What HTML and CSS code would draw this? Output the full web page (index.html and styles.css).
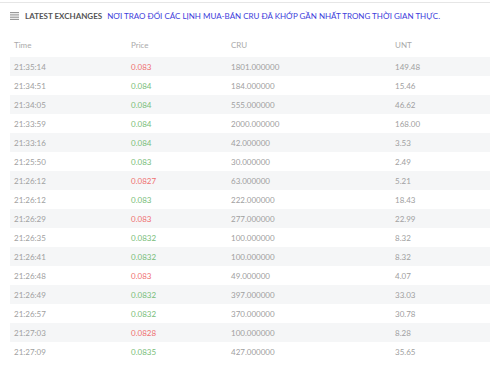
FILE: index.html
```html
<!DOCTYPE html>
<html>
<head>
<meta charset="utf-8">
<link rel="stylesheet" href="styles.css">
</head>
<body>
<div class="panel">
  <div class="title">
    <svg class="icon" width="9" height="8" viewBox="0 0 9 8"><rect x="0" y="0" width="9" height="1.2" fill="#999"/><rect x="0" y="2.3" width="9" height="1.2" fill="#999"/><rect x="0" y="4.6" width="9" height="1.2" fill="#999"/><rect x="0" y="6.8" width="9" height="1.2" fill="#999"/></svg>
    <span class="name">LATEST EXCHANGES</span>
    <span class="desc">NƠI TRAO ĐỔI CÁC LỊNH MUA-BÁN CRU ĐÃ KHỚP GẦN NHẤT TRONG THỜI GIAN THỰC.</span>
  </div>
  <table class="trades">
    <thead>
      <tr><th class="c1">Time</th><th class="c2">Price</th><th class="c3">CRU</th><th class="c4">UNT</th></tr>
    </thead>
    <tbody>
      <tr><td>21:35:14</td><td class="down">0.083</td><td>1801.000000</td><td>149.48</td></tr>
      <tr><td>21:34:51</td><td class="up">0.084</td><td>184.000000</td><td>15.46</td></tr>
      <tr><td>21:34:05</td><td class="up">0.084</td><td>555.000000</td><td>46.62</td></tr>
      <tr><td>21:33:59</td><td class="up">0.084</td><td>2000.000000</td><td>168.00</td></tr>
      <tr><td>21:33:16</td><td class="up">0.084</td><td>42.000000</td><td>3.53</td></tr>
      <tr><td>21:25:50</td><td class="up">0.083</td><td>30.000000</td><td>2.49</td></tr>
      <tr><td>21:26:12</td><td class="down">0.0827</td><td>63.000000</td><td>5.21</td></tr>
      <tr><td>21:26:12</td><td class="up">0.083</td><td>222.000000</td><td>18.43</td></tr>
      <tr><td>21:26:29</td><td class="down">0.083</td><td>277.000000</td><td>22.99</td></tr>
      <tr><td>21:26:35</td><td class="up">0.0832</td><td>100.000000</td><td>8.32</td></tr>
      <tr><td>21:26:41</td><td class="up">0.0832</td><td>100.000000</td><td>8.32</td></tr>
      <tr><td>21:26:48</td><td class="down">0.083</td><td>49.000000</td><td>4.07</td></tr>
      <tr><td>21:26:49</td><td class="up">0.0832</td><td>397.000000</td><td>33.03</td></tr>
      <tr><td>21:26:57</td><td class="up">0.0832</td><td>370.000000</td><td>30.78</td></tr>
      <tr><td>21:27:03</td><td class="down">0.0828</td><td>100.000000</td><td>8.28</td></tr>
      <tr><td>21:27:09</td><td class="up">0.0835</td><td>427.000000</td><td>35.65</td></tr>
    </tbody>
  </table>
</div>
</body>
</html>
```
FILE: styles.css
```css
html, body {
  margin: 0;
  padding: 0;
  background: #fff;
}
body {
  font-family: Lato, "Open Sans", sans-serif;
  font-size: 8px;
  color: #a0a0a0;
}
.panel {
  width: 490px;
  margin-top: 2px;
  border-top: 1px solid #e6e6e6;
}
.title {
  display: flex;
  align-items: center;
  height: 24px;
  padding-left: 10px;
  padding-top: 1px;
}
.icon {
  display: block;
  margin-right: 6px;
}
.name {
  font-weight: 700;
  color: #555;
  font-size: 8px;
  margin-right: 5px;
}
.desc {
  color: #3d3ddb;
  font-size: 8px;
}
.trades {
  margin-left: 10px;
  margin-top: 5px;
  width: 480px;
  border-collapse: collapse;
  table-layout: fixed;
}
.trades th, .trades td {
  text-align: left;
  font-weight: 400;
  padding: 0 0 0 4px;
  height: 19px;
  white-space: nowrap;
}
.trades th {
  height: 24px;
  color: #aaa;
}
.c1 { width: 113px; }
.c2 { width: 96px; }
.c3 { width: 160px; }
.c4 { width: 95px; }
.trades tbody tr:nth-child(odd) {
  background: #f5f6f7;
}
.up { color: #78bd78; }
.down { color: #ef7070; }
```
